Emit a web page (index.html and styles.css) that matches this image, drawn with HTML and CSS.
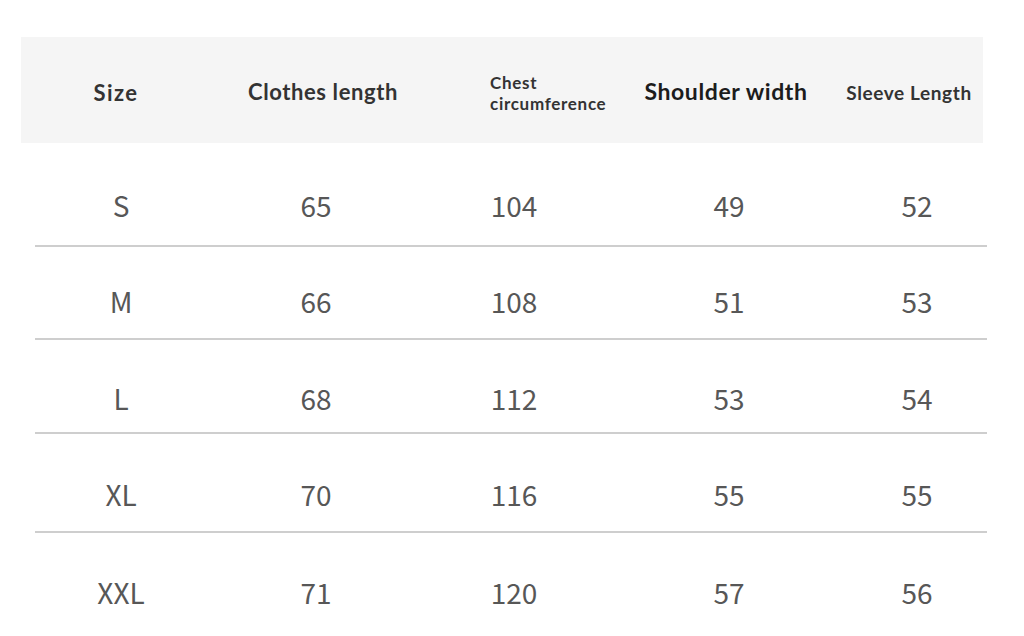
FILE: index.html
```html
<!DOCTYPE html>
<html>
<head>
<meta charset="utf-8">
<link rel="stylesheet" href="styles.css">
</head>
<body>
<div class="chart">
  <div class="head">
    <div class="hc c-size">Size</div>
    <div class="hc c-len">Clothes length</div>
    <div class="hc c-chest"><span>Chest<br>circumference</span></div>
    <div class="hc c-shoulder">Shoulder width</div>
    <div class="hc c-sleeve">Sleeve Length</div>
  </div>
  <div class="rows">
    <div class="row r1"><div class="dc">S</div><div class="dc">65</div><div class="dc">104</div><div class="dc">49</div><div class="dc">52</div></div>
    <div class="row r2"><div class="dc">M</div><div class="dc">66</div><div class="dc">108</div><div class="dc">51</div><div class="dc">53</div></div>
    <div class="row r3"><div class="dc">L</div><div class="dc">68</div><div class="dc">112</div><div class="dc">53</div><div class="dc">54</div></div>
    <div class="row r4"><div class="dc">XL</div><div class="dc">70</div><div class="dc">116</div><div class="dc">55</div><div class="dc">55</div></div>
    <div class="row r5"><div class="dc">XXL</div><div class="dc">71</div><div class="dc">120</div><div class="dc">57</div><div class="dc">56</div></div>
  </div>
</div>
</body>
</html>
```
FILE: styles.css
```css
html, body {
  margin: 0;
  padding: 0;
  background: #ffffff;
}
body {
  width: 1024px;
  height: 636px;
  overflow: hidden;
}
.chart {
  padding-top: 37px;
}
.head {
  margin-left: 21px;
  width: 962px;
  height: 106px;
  background: #f5f5f5;
  display: grid;
  grid-template-columns: 190px 224px 170px 242px 136px;
  align-items: center;
  font-family: Lato, "Open Sans", sans-serif;
  font-weight: 700;
  color: #333333;
}
.hc {
  display: flex;
  justify-content: center;
  white-space: nowrap;
}
.c-size { font-size: 22px; letter-spacing: 1.4px; padding-top: 4px; }
.c-len { font-size: 22px; letter-spacing: 0.6px; padding-top: 2px; }
.c-chest {
  justify-content: flex-start;
  padding-left: 55px;
  font-size: 17px;
  line-height: 21px;
  letter-spacing: 0.7px;
  padding-top: 6px;
}
.c-shoulder { font-size: 23px; letter-spacing: 0.6px; color: #1c1c1c; padding-top: 2px; }
.c-sleeve { font-size: 19px; letter-spacing: 0.6px; padding-top: 4px; padding-right: 12px; }

.rows {
  margin-left: 35px;
  width: 952px;
}
.row {
  display: grid;
  grid-template-columns: 172px 218px 178px 252px 124px;
  box-sizing: border-box;
  border-bottom: 2px solid #cecece;
  font-family: "Noto Sans CJK SC", "Noto Sans", sans-serif;
  font-size: 28px;
  line-height: 40px;
  color: #575757;
}
.dc {
  display: flex;
  justify-content: center;
}
.r1 { height: 104px; padding-top: 42px; }
.r2 { height: 93px; padding-top: 34px; }
.r3 { height: 94px; padding-top: 38px; }
.r4 { height: 99px; padding-top: 40px; }
.r5 { height: 103px; padding-top: 39px; border-bottom: none; }
```
